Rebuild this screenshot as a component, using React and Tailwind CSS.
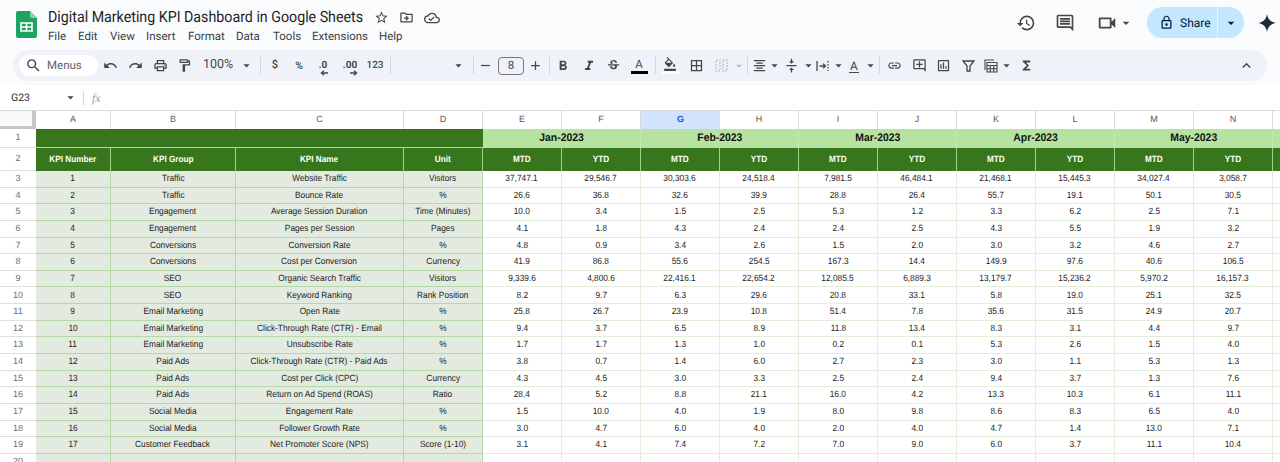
import React from "react";
import {
  MdSearch, MdUndo, MdRedo, MdOutlinePrint, MdOutlineFormatPaint, MdArrowDropDown, MdRemove, MdAdd, MdFormatBold, MdFormatItalic,
  MdStrikethroughS, MdBorderAll, MdFormatAlignCenter, MdVerticalAlignCenter, MdInsertLink, MdOutlineAddComment, MdOutlineAssessment,
  MdFunctions, MdExpandLess, MdHistory, MdOutlineComment, MdOutlineVideocam, MdLockOutline, MdStarBorder,
  MdOutlineDriveFileMove, MdOutlineCloudDone, MdFormatColorFill,
} from "react-icons/md";

const rows = [
  ["1","Traffic","Website Traffic","Visitors","37,747.1","29,546.7","30,303.6","24,518.4","7,981.5","46,484.1","21,468.1","15,445.3","34,027.4","3,058.7"],
  ["2","Traffic","Bounce Rate","%","26.6","36.8","32.6","39.9","28.8","26.4","55.7","19.1","50.1","30.5"],
  ["3","Engagement","Average Session Duration","Time (Minutes)","10.0","3.4","1.5","2.5","5.3","1.2","3.3","6.2","2.5","7.1"],
  ["4","Engagement","Pages per Session","Pages","4.1","1.8","4.3","2.4","2.4","2.5","4.3","5.5","1.9","3.2"],
  ["5","Conversions","Conversion Rate","%","4.8","0.9","3.4","2.6","1.5","2.0","3.0","3.2","4.6","2.7"],
  ["6","Conversions","Cost per Conversion","Currency","41.9","86.8","55.6","254.5","167.3","14.4","149.9","97.6","40.6","106.5"],
  ["7","SEO","Organic Search Traffic","Visitors","9,339.6","4,800.6","22,416.1","22,654.2","12,085.5","6,889.3","13,179.7","15,236.2","5,970.2","16,157.3"],
  ["8","SEO","Keyword Ranking","Rank Position","8.2","9.7","6.3","29.6","20.8","33.1","5.8","19.0","25.1","32.5"],
  ["9","Email Marketing","Open Rate","%","25.8","26.7","23.9","10.8","51.4","7.8","35.6","31.5","24.9","20.7"],
  ["10","Email Marketing","Click-Through Rate (CTR) - Email","%","9.4","3.7","6.5","8.9","11.8","13.4","8.3","3.1","4.4","9.7"],
  ["11","Email Marketing","Unsubscribe Rate","%","1.7","1.7","1.3","1.0","0.2","0.1","5.3","2.6","1.5","4.0"],
  ["12","Paid Ads","Click-Through Rate (CTR) - Paid Ads","%","3.8","0.7","1.4","6.0","2.7","2.3","3.0","1.1","5.3","1.3"],
  ["13","Paid Ads","Cost per Click (CPC)","Currency","4.3","4.5","3.0","3.3","2.5","2.4","9.4","3.7","1.3","7.6"],
  ["14","Paid Ads","Return on Ad Spend (ROAS)","Ratio","28.4","5.2","8.8","21.1","16.0","4.2","13.3","10.3","6.1","11.1"],
  ["15","Social Media","Engagement Rate","%","1.5","10.0","4.0","1.9","8.0","9.8","8.6","8.3","6.5","4.0"],
  ["16","Social Media","Follower Growth Rate","%","3.0","4.7","6.0","4.0","2.0","4.0","4.7","1.4","13.0","7.1"],
  ["17","Customer Feedback","Net Promoter Score (NPS)","Score (1-10)","3.1","4.1","7.4","7.2","7.0","9.0","6.0","3.7","11.1","10.4"],
  ["","","","","","","","","","","","","",""],
];
const letters = ["A","B","C","D","E","F","G","H","I","J","K","L","M","N"];
const months = ["Jan-2023","Feb-2023","Mar-2023","Apr-2023","May-2023"];
const heads = ["KPI Number","KPI Group","KPI Name","Unit"];
const menus = ["File","Edit","View","Insert","Format","Data","Tools","Extensions","Help"];
const menuW = ["w-[30px]","w-[32px]","w-[36px]","w-[42px]","w-[48px]","w-[37px]","w-[39px]","w-[67px]","w-[30px]"];

function C({ w, children, className = "" }) {
  return <span className={`flex h-full shrink-0 items-center justify-center ${w} ${className}`}>{children}</span>;
}
const Sep = ({ ml }) => <span className={`h-[17px] w-px shrink-0 bg-[#d3d6da] ${ml}`} />;
const Caret = ({ w = "w-[8px]" }) => <C w={w}><MdArrowDropDown className="size-[15px] shrink-0 text-[#444746]" /></C>;
const ic = "size-[15px] shrink-0 text-[#444746]";

function Logo() {
  return (
    <svg width="21" height="27" viewBox="0 0 21 27" className="mt-[11px] ml-[16px] shrink-0">
      <path d="M2 0H14L21 7V25a2 2 0 0 1-2 2H2a2 2 0 0 1-2-2V2a2 2 0 0 1 2-2Z" fill="#1ea362" />
      <path d="M14 0L21 7H16a2 2 0 0 1-2-2Z" fill="#8ed1b1" />
      <path d="M5 12H16V20H5Z" fill="none" stroke="#fff" strokeWidth="1.6" />
      <path d="M10.5 12V20M5 16H16" stroke="#fff" strokeWidth="1.6" />
    </svg>
  );
}
function DecArrow({ flip }) {
  return (
    <svg width="8" height="6" viewBox="0 0 8 6" className="absolute bottom-[-5px] right-[-1px]">
      {flip ? <path d="M0 3H6M4 .8L6.6 3 4 5.2" stroke="#444746" strokeWidth="1.3" fill="none" />
            : <path d="M8 3H2M4 .8L1.4 3 4 5.2" stroke="#444746" strokeWidth="1.3" fill="none" />}
    </svg>
  );
}

function Toolbar() {
  return (
    <div className="mx-[13px] flex h-[31px] items-center rounded-full bg-[#eff3f9] pl-[6px] text-[#444746]">
      <div className="flex h-[21px] w-[79px] shrink-0 items-center rounded-full bg-white pl-[6px]">
        <MdSearch className="size-[17px] text-[#444746]" />
        <span className="ml-[5px] text-[11.5px] text-[#5f6368]">Menus</span>
      </div>
      <C w="w-[24px]"><MdUndo className={ic} /></C>
      <C w="w-[26px]"><MdRedo className={ic} /></C>
      <C w="w-[24px]"><MdOutlinePrint className={ic} /></C>
      <C w="w-[24px]"><MdOutlineFormatPaint className={ic} /></C>
      <C w="w-[44px]" className="text-[12.5px]">100%</C>
      <Caret w="w-[12px]" />
      <Sep ml="ml-[8px]" />
      <C w="w-[28px]" className="text-[11px] font-medium">$</C>
      <C w="w-[20px]" className="text-[10.5px] font-medium">%</C>
      <C w="w-[28px]"><span className="relative text-[10px] font-bold leading-none">.0<DecArrow /></span></C>
      <C w="w-[26px]"><span className="relative text-[10px] font-bold leading-none">.00<DecArrow flip /></span></C>
      <C w="w-[24px]" className="text-[10px] font-medium">123</C>
      <Sep ml="ml-[3px]" />
      <span className="w-[61px] shrink-0" />
      <Caret w="w-[12px]" />
      <Sep ml="ml-[9px]" />
      <C w="w-[23px]"><MdRemove className={ic} /></C>
      <C w="w-[28px]"><span className="flex h-[18px] w-[26px] items-center justify-center rounded-[4px] border border-[#747775] text-[11.5px]">8</span></C>
      <C w="w-[20px]"><MdAdd className={ic} /></C>
      <Sep ml="ml-[4px]" />
      <C w="w-[26px]"><MdFormatBold className="size-[16px] shrink-0 text-[#444746]" /></C>
      <C w="w-[25px]"><MdFormatItalic className="size-[16px] shrink-0 text-[#444746]" /></C>
      <C w="w-[25px]"><MdStrikethroughS className={ic} /></C>
      <C w="w-[26px]">
        <span className="flex flex-col items-center leading-none">
          <span className="text-[11.5px] leading-[12px]">A</span>
          <span className="mt-[1px] h-[3px] w-[17px] bg-black" />
        </span>
      </C>
      <Sep ml="ml-[3px]" />
      <C w="w-[28px]">
        <span className="flex flex-col items-center">
          <MdFormatColorFill className="size-[14px] text-[#444746]" />
          <span className="h-[3px] w-[17px] bg-white" />
        </span>
      </C>
      <C w="w-[24px]"><MdBorderAll className={ic} /></C>
      <C w="w-[26px]">
        <svg width="13" height="13" viewBox="0 0 13 13" fill="none" stroke="#b6b9bd" strokeWidth="1.1" strokeDasharray="2 1">
          <path d="M1 1H5V12H1ZM8 1H12V12H8Z" />
        </svg>
      </C>
      <C w="w-[10px]"><MdArrowDropDown className="size-[14px] shrink-0 text-[#b6b9bd]" /></C>
      <Sep ml="ml-[3px]" />
      <C w="w-[22px]"><MdFormatAlignCenter className={ic} /></C>
      <Caret />
      <C w="w-[26px]"><MdVerticalAlignCenter className={ic} /></C>
      <Caret />
      <C w="w-[22px]">
        <svg width="14" height="12" viewBox="0 0 14 12" fill="none" stroke="#444746" strokeWidth="1.3">
          <path d="M1 1V11M3.5 6H9M7 3.6L9.5 6 7 8.4" />
          <path d="M12 1V11" strokeDasharray="1.5 1.5" />
        </svg>
      </C>
      <Caret />
      <C w="w-[24px]">
        <span className="relative text-[12px] leading-none">A<span className="absolute left-[-1px] right-[-1px] bottom-[-1px] h-px bg-[#444746]" /></span>
      </C>
      <Caret />
      <Sep ml="ml-[5px]" />
      <C w="w-[28px]"><MdInsertLink className={ic} /></C>
      <C w="w-[23px]"><MdOutlineAddComment className={ic} /></C>
      <C w="w-[25px]"><MdOutlineAssessment className={ic} /></C>
      <C w="w-[24px]">
        <svg width="13" height="12" viewBox="0 0 13 12" fill="none" stroke="#444746" strokeWidth="1.3"><path d="M1 1H12L8 6V11H5V6Z" /></svg>
      </C>
      <C w="w-[22px]">
        <svg width="14" height="14" viewBox="0 0 14 14" fill="none" stroke="#444746" strokeWidth="1.1">
          <path d="M3 3.5H13V13H3ZM3 6.5H13M3 9.7H13M6.3 6.5V13M9.7 6.5V13" />
          <path d="M1 11V1H10" />
        </svg>
      </C>
      <Caret />
      <C w="w-[32px]"><MdFunctions className={ic} /></C>
      <span className="flex-1" />
      <C w="w-[24px]" className="mr-[9px]"><MdExpandLess className="size-[17px] shrink-0 text-[#444746]" /></C>
    </div>
  );
}

const hdrCell = "flex items-center justify-center border-r border-[#d9d9d9] bg-white text-[9px] text-[#575a5e]";
const leftCell = "flex items-center justify-center border-r border-b border-[#b6d7a8] bg-[#e3ebe0] text-[9px] text-[#222] whitespace-nowrap";
const dataCell = "flex items-center justify-center border-r border-b border-[#e3efdb] bg-white text-[9px] text-[#222]";
const rowHdr = "flex items-center justify-center border-b border-[#e0e0e0] bg-white text-[9px] text-[#6b6e72]";

function Sheet() {
  return (
    <div className="grid grid-cols-[36px_75px_125px_168px_79px_repeat(10,79px)_7px] grid-rows-[18px_19px_23px_repeat(18,16.65px)] border-t border-[#dadce0] font-['Liberation_Sans',Arial,sans-serif]">
      <div className="border-r-[4px] border-b-[3px] border-[#c4c7c8] bg-[#f8f9fa]" />
      {letters.map((l) => (
        <div key={l} className={l === "G" ? "flex items-center justify-center bg-[#d3e3fd] text-[9px] font-bold text-[#0b57d0]" : hdrCell}>{l}</div>
      ))}
      <div className="bg-white" />

      <div className={rowHdr}>1</div>
      <div className="col-span-4 border-b border-[#b6d7a8] bg-[#38761d]" />
      {months.map((m) => (
        <div key={m} className="col-span-2 flex items-center justify-center border-r border-[#c7e7b8] bg-[#b6e3a0] text-[11px] font-bold text-[#111]"><span className="scale-x-[.945]">{m}</span></div>
      ))}
      <div className="bg-[#b6e3a0]" />

      <div className={rowHdr}>2</div>
      {heads.map((h) => (
        <div key={h} className="flex items-center justify-center border-r border-[#9fd18a] bg-[#38761d] text-[9px] font-bold text-white"><span className="scale-x-[.91]">{h}</span></div>
      ))}
      {months.flatMap((m) => ["MTD", "YTD"].map((t) => (
        <div key={m + t} className="flex items-center justify-center border-r border-[#9fd18a] bg-[#38761d] text-[9px] font-bold text-white"><span className="scale-x-[.91]">{t}</span></div>
      )))}
      <div className="bg-[#38761d]" />

      {rows.map((r, i) => (
        <React.Fragment key={i}>
          <div className={rowHdr}>{i + 3}</div>
          {r.map((v, j) => (
            <div key={j} className={j < 4 ? leftCell : dataCell}><span className="scale-x-[.925]">{v}</span></div>
          ))}
          <div className="border-b border-[#e3efdb] bg-white" />
        </React.Fragment>
      ))}
    </div>
  );
}

export default function App() {
  return (
    <div className="h-[462px] w-[1280px] overflow-hidden bg-[#f9fbfd] font-['Roboto',Arial,sans-serif] text-[#1f1f1f] [text-rendering:geometricPrecision]">
      <div className="flex h-[50px]">
        <Logo />
        <div className="ml-[11px] w-[560px]">
          <div className="mt-[7px] flex h-[21px] items-center">
            <span className="w-[326px] origin-left scale-x-[.918] whitespace-nowrap text-[15.5px] leading-[21px] text-[#1f1f1f]">Digital Marketing KPI Dashboard in Google Sheets</span>
            <MdStarBorder className="size-[15px] text-[#444746]" />
            <MdOutlineDriveFileMove className="ml-[10px] size-[15px] text-[#444746]" />
            <MdOutlineCloudDone className="ml-[10px] size-[16px] text-[#444746]" />
          </div>
          <div className="mt-[1px] flex h-[15px] items-center text-[11.5px] text-[#3c4043]">
            {menus.map((m, i) => <span key={m} className={menuW[i]}>{m}</span>)}
          </div>
        </div>
        <div className="ml-auto flex h-[45px] items-center pr-[4px]">
          <MdHistory className="size-[20px] text-[#444746]" />
          <MdOutlineComment className="ml-[19px] size-[20px] text-[#444746]" />
          <MdOutlineVideocam className="ml-[21px] size-[22px] text-[#444746]" />
          <MdArrowDropDown className="size-[16px] text-[#444746]" />
          <div className="ml-[13px] flex h-[31px] w-[97px] items-center rounded-full bg-[#c2e7ff]">
            <div className="flex h-full w-[71px] items-center border-r border-[#e5f4ff] pl-[12px] text-[12px] text-[#001d35]">
              <MdLockOutline className="mr-[6px] size-[15px]" />Share
            </div>
            <div className="flex flex-1 justify-center"><MdArrowDropDown className="size-[16px] text-[#001d35]" /></div>
          </div>
          <svg width="18" height="18" viewBox="0 0 18 18" className="ml-[14px]">
            <path d="M9 0C9.6 5 13 8.4 18 9 13 9.6 9.6 13 9 18 8.4 13 5 9.6 0 9 5 8.4 8.4 5 9 0Z" fill="#1f2a37" />
          </svg>
        </div>
      </div>
      <Toolbar />
      <div className="mt-[4px] flex h-[25px] items-center bg-white">
        <span className="ml-[11px] w-[52px] text-[10.5px] text-[#333]">G23</span>
        <MdArrowDropDown className="size-[15px] text-[#444746]" />
        <span className="ml-[5px] h-[14px] w-px bg-[#d5d7da]" />
        <span className="ml-[8px] font-['Liberation_Serif',serif] text-[12px] italic text-[#9aa0a6]">fx</span>
      </div>
      <Sheet />
    </div>
  );
}
